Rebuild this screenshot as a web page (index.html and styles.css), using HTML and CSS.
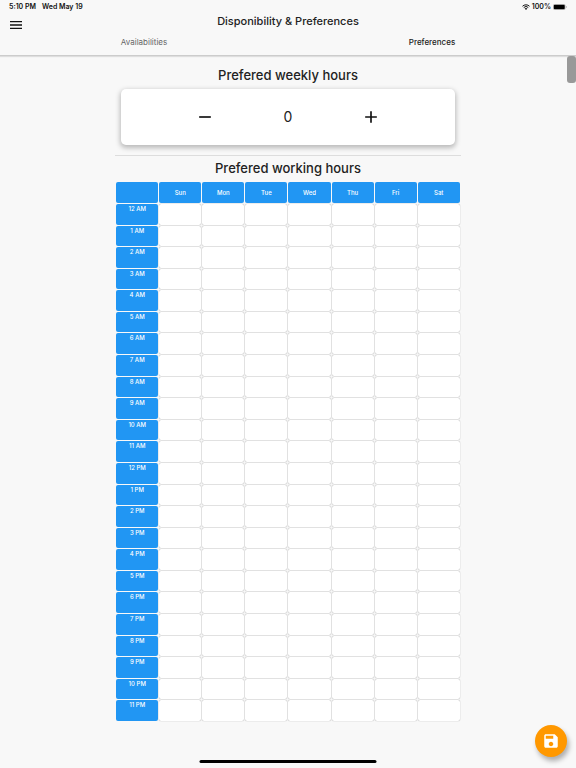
FILE: index.html
```html
<!DOCTYPE html>
<html lang="en">
  <head>
    <meta charset="UTF-8">
    <meta name="viewport" content="width=device-width, initial-scale=1.0">
    <title>Disponibility &amp; Preferences</title>
    <link rel="stylesheet" href="styles.css">
  </head>
  <body>
    <header class="app-bar">
        <div class="status-bar">
            <span>5:10 PM</span>
            <span>Wed May 19</span>
            <span class="status-right">
                <svg class="wifi" viewBox="0 0 16 12" aria-hidden="true">
                    <path d="M1 4.5a10 10 0 0 1 14 0M3.5 7a6.5 6.5 0 0 1 9 0" fill="none" stroke="#111" stroke-width="2"/>
                    <path d="M8 12L5.3 9.2a3.8 3.8 0 0 1 5.4 0z" fill="#111"/>
                </svg>
                100%
                <svg class="battery" viewBox="0 0 28 12" aria-hidden="true">
                    <rect x=".5" y=".5" width="24" height="11" rx="3" fill="none" stroke="#999"/>
                    <rect x="1.5" y="1.5" width="22" height="9" rx="2" fill="#000"/>
                    <path d="M26 4v4c2-.5 2-3.500 0-4z" fill="#999"/>
                </svg>
            </span>
        </div>
        <div class="toolbar">
            <button class="icon-btn" type="button" aria-label="Menu">
                <svg viewBox="0 0 24 24"><path d="M3 18h18v-2H3v2zm0-5h18v-2H3v2zm0-7v2h18V6H3z"/></svg>
            </button>
            <h1>Disponibility &amp; Preferences</h1>
        </div>
        <nav class="tabs">
            <a href="#availabilities">Availabilities</a>
            <a class="active" href="#preferences">Preferences</a>
        </nav>
    </header>

    <main class="content" id="preferences">
        <h2>Prefered weekly hours</h2>
        <div class="counter">
            <button class="icon-btn" id="minus" type="button" aria-label="Less hours">
                <svg viewBox="0 0 24 24"><path d="M19 13H5v-2h14v2z"/></svg>
            </button>
            <output id="hours">0</output>
            <button class="icon-btn" id="plus" type="button" aria-label="More hours">
                <svg viewBox="0 0 24 24"><path d="M19 13h-6v6h-2v-6H5v-2h6V5h2v6h6v2z"/></svg>
            </button>
        </div>
        <hr>
        <h2>Prefered working hours</h2>
        <table class="schedule">
            <thead>
                <tr>
                    <th></th>
                    <th scope="col">Sun</th>
                    <th scope="col">Mon</th>
                    <th scope="col">Tue</th>
                    <th scope="col">Wed</th>
                    <th scope="col">Thu</th>
                    <th scope="col">Fri</th>
                    <th scope="col">Sat</th>
                </tr>
            </thead>
            <tbody id="slots"></tbody>
        </table>
    </main>

    <div class="scroll-thumb"></div>
    <button class="fab" type="button" aria-label="Save">
        <svg viewBox="0 0 24 24"><path d="M17 3H5c-1.110 0-2 .9-2 2v14c0 1.100.89 2 2 2h14c1.100 0 2-.9 2-2V7l-4-4zm-5 16c-1.660 0-3-1.340-3-3s1.340-3 3-3 3 1.340 3 3-1.340 3-3 3zm3-10H5V5h10v4z"/></svg>
    </button>
    <div class="home-indicator"></div>

    <script>
        // One row per hour of the day
        const slots = document.getElementById('slots');
        for (let h = 0; h < 24; h++) {
            const label = `${h % 12 || 12} ${h < 12 ? 'AM' : 'PM'}`;
            slots.insertAdjacentHTML('beforeend',
                `<tr><th scope="row">${label}</th>${'<td></td>'.repeat(7)}</tr>`);
        }

        const hours = document.getElementById('hours');
        document.getElementById('minus').addEventListener('click', function() {
            hours.textContent = Math.max(0, Number(hours.textContent) - 1);
        });
        document.getElementById('plus').addEventListener('click', function() {
            hours.textContent = Number(hours.textContent) + 1;
        });
    </script>
  </body>
</html>
```

FILE: styles.css
```css
* {
    box-sizing: border-box;
}
body {
    margin: 0;
    background-color: #f8f8f8;
    color: #222;
    font-family: Inter, 'Liberation Sans', sans-serif;
}
h1, h2 {
    margin: 0;
    font-weight: 500;
    text-align: center;
}
button {
    padding: 0;
    border: none;
    background: none;
    cursor: pointer;
}
svg {
    display: block;
}
.app-bar {
    border-bottom: 1px solid #ccc;
    box-shadow: 0 1px 1px rgba(0, 0, 0, 0.1);
}
.status-bar {
    display: flex;
    gap: 6px;
    padding: 0 9px;
    font-size: 7px;
    font-weight: 600;
    line-height: 14px;
    color: #111;
}
.status-right {
    display: flex;
    align-items: center;
    gap: 2px;
    margin-left: auto;
}
.wifi {
    width: 8px;
    height: 6px;
}
.battery {
    width: 14px;
    height: 6px;
}
.toolbar {
    display: grid;
    grid-template-columns: 16px 1fr 16px;
    align-items: start;
    padding: 0 8px;
}
.toolbar .icon-btn {
    padding: 3px 0;
}
h1 {
    font-size: 11px;
    line-height: 15px;
}
.icon-btn svg {
    width: 16px;
    height: 16px;
    fill: #111;
}
.tabs {
    display: grid;
    grid-template-columns: 1fr 1fr;
    font-size: 8px;
    line-height: 12px;
    text-align: center;
}
.tabs a {
    padding-bottom: 7px;
    color: #666;
    text-decoration: none;
}
.tabs .active {
    color: #222;
    font-weight: 500;
}
.content {
    width: 60%;
    margin: 0 auto;
    padding: 10px 0 40px;
}
h2 {
    font-size: 13px;
    line-height: 18px;
}
.counter {
    display: grid;
    grid-template-columns: repeat(3, 25%);
    align-items: center;
    justify-content: center;
    justify-items: center;
    margin: 5px 6px 10px;
    padding: 18px 0;
    border-radius: 5px;
    background: white;
    box-shadow: 0 2px 5px 1px rgba(0, 0, 0, 0.25);
}
.counter svg {
    width: 20px;
    height: 20px;
}
.counter output {
    font-size: 14px;
    line-height: 20px;
}
hr {
    margin: 0 0 3px;
    border: none;
    border-top: 1px solid #ddd;
}
.schedule {
    width: 100%;
    height: 541px;
    margin-top: 4px;
    table-layout: fixed;
    border-spacing: 1px;
}
.schedule th {
    padding: 1px 0;
    border-radius: 2px;
    background-color: #2196f3;
    color: white;
    font-size: 6px;
    font-weight: 500;
    line-height: 8px;
    vertical-align: top;
}
.schedule thead th {
    height: 21px;
    vertical-align: middle;
}
.schedule td {
    padding: 0;
    border-radius: 2px;
    background: white;
    box-shadow: 0 0 1px #888;
}
.scroll-thumb {
    position: fixed;
    top: 56px;
    right: 0;
    width: 9px;
    height: 27px;
    border-radius: 3px;
    background: #999;
}
.fab {
    position: fixed;
    right: 9px;
    bottom: 11px;
    display: grid;
    place-items: center;
    width: 32px;
    height: 32px;
    border-radius: 50%;
    background-color: #ff9800;
    box-shadow: 2px 4px 5px rgba(0, 0, 0, 0.3);
}
.fab svg {
    width: 18px;
    height: 18px;
    fill: white;
}
.home-indicator {
    position: fixed;
    bottom: 5px;
    left: 50%;
    width: 177px;
    height: 3px;
    border-radius: 2px;
    background: black;
    transform: translateX(-50%);
}
```
